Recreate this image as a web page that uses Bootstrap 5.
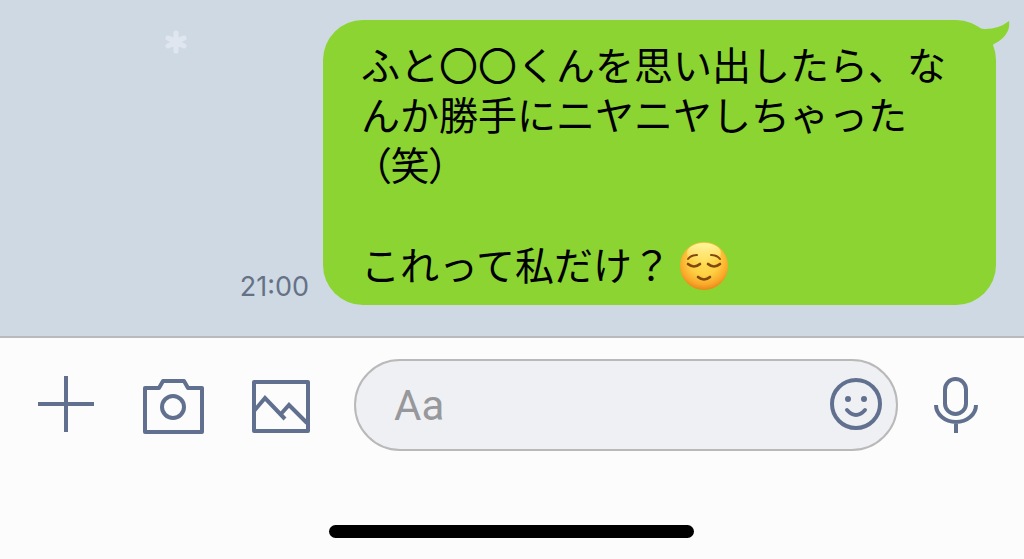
<!DOCTYPE html>
<html lang="ja">
<head>
<meta charset="utf-8">
<meta name="viewport" content="width=device-width, initial-scale=1">
<title>トーク</title>
<link href="https://cdn.jsdelivr.net/npm/bootstrap@5.3.0/dist/css/bootstrap.min.css" rel="stylesheet">
<style>
  body { background: #fcfcfc; font-family: Inter, "Noto Sans CJK JP", sans-serif; }
  .chat { background: #cfd9e4; padding: 20px 28px 31px; }
  .flake { top: 30px; left: 164px; width: 24px; height: 24px; }
  .sent-time { font-size: 27px; line-height: 36px; color: #657286; margin-right: 14px; }
  .bubble { background: #8cd432; color: #000; border-radius: 40px; padding: 18px 50px 17px 38px;
    font-family: "Noto Sans CJK JP", sans-serif; font-size: 39px; line-height: 50px; }
  .laugh { display: block; font-feature-settings: "palt"; padding-left: 10px; }
  .tail { top: 0; right: -14px; width: 40px; height: 32px; }
  .emoji { width: 50px; height: 50px; margin: 3px 0 -3px 8px; vertical-align: top; }
  .composer { border-top: 2px solid #b9babd; padding: 21px 36px 0 34px; }
  .tool { width: 64px; height: 64px; color: #627090; }
  .tools { gap: 44px; margin-right: 40px; }
  .entry { margin-right: 26px; }
  .entry .form-control { height: 92px; border: 2px solid #b9b9ba; background: #eff0f3; padding: 0 90px 0 38px;
    font-family: Roboto, sans-serif; font-size: 42px; }
  .entry .form-control::placeholder { color: #97989b; opacity: 1; }
  .smile { right: 10px; top: 14px; }
  .home-bar { width: 365px; height: 13px; background: #000; margin-bottom: 21px; }
</style>
</head>
<body class="min-vh-100 d-flex flex-column">
<main class="chat position-relative d-flex justify-content-end align-items-end">
  <svg class="flake position-absolute" viewBox="0 0 24 24" fill="none" stroke="#e0e6ef" stroke-linecap="round" aria-hidden="true">
    <path stroke-width="5" d="M12 3v18M4 8l16 8M4 16l16-8"/>
    <circle cx="12" cy="12" r="4" stroke-width="4"/>
  </svg>
  <time class="sent-time">21:00</time>
  <div class="bubble position-relative">
    <svg class="tail position-absolute" viewBox="970 20 40 32" aria-hidden="true">
      <path fill="#8cd432" d="M973 24Q979 29 985 29Q999 29 1009 21Q1011 35 994 44L984 52Z"/>
    </svg>
    <p class="m-0">ふと〇〇くんを思い出したら、な<br>んか勝手にニヤニヤしちゃった<span class="laugh">（笑）</span></p>
    <br>
    <p class="m-0">これって私だけ？<svg class="emoji" viewBox="0 0 50 50" role="img" aria-label="ほっとした顔">
      <defs>
        <radialGradient id="face" cx=".5" cy=".38" r=".62">
          <stop offset="0" stop-color="#ffe05a"/><stop offset=".5" stop-color="#ffd042"/><stop offset=".82" stop-color="#f9a829"/><stop offset="1" stop-color="#e98618"/>
        </radialGradient>
        <linearGradient id="shine" x2="0" y2="1">
          <stop offset="0" stop-color="#fff7a0"/><stop offset="1" stop-color="#fff7a0" stop-opacity="0"/>
        </linearGradient>
      </defs>
      <circle cx="25" cy="25" r="24" fill="url(#face)"/>
      <ellipse cx="25" cy="12" rx="17" ry="10" fill="url(#shine)"/>
      <g fill="none" stroke="#80480f" stroke-linecap="round">
        <path stroke-width="2" d="M9 18Q12 14 18 14M32 14Q38 14 41 18"/>
        <path stroke-width="2.6" d="M9 23Q15 28 21 23M29 23Q35 28 41 23"/>
        <path stroke-width="2.6" d="M19 36Q25 41 31 36"/>
      </g>
    </svg></p>
  </div>
</main>
<footer class="composer flex-grow-1 d-flex flex-column">
  <form class="d-flex align-items-center">
    <div class="tools d-flex flex-shrink-0">
      <button type="button" class="tool btn border-0 p-0" aria-label="追加">
        <svg class="d-block" viewBox="0 0 64 64" fill="none" stroke="currentColor" stroke-width="4"><path d="M4 31h56M32 3v56"/></svg>
      </button>
      <button type="button" class="tool btn border-0 p-0" aria-label="カメラ">
        <svg class="d-block" viewBox="0 0 64 64" fill="none" stroke="currentColor" stroke-width="4" stroke-linejoin="round"><path d="M3 15h14l4-7h21l4 7h14v44H3z"/><circle cx="31" cy="34" r="11"/></svg>
      </button>
      <button type="button" class="tool btn border-0 p-0" aria-label="写真">
        <svg class="d-block" viewBox="0 0 64 64" fill="none" stroke="currentColor" stroke-width="4"><path stroke-linejoin="round" d="M4 9h54v49H4z"/><path d="M4 38l11-13 20 21M30 42l9-10 18 18"/></svg>
      </button>
    </div>
    <div class="entry position-relative flex-grow-1">
      <input type="text" class="form-control rounded-pill" placeholder="Aa" aria-label="メッセージを入力">
      <button type="button" class="smile tool btn border-0 p-0 position-absolute" aria-label="スタンプ">
        <svg class="d-block" viewBox="0 0 64 64" fill="none" stroke="currentColor" stroke-width="4" stroke-linecap="round"><circle cx="32" cy="31" r="24"/><path d="M23 37Q32 47 41 37"/><circle cx="24" cy="26" r="3" fill="currentColor" stroke="none"/><circle cx="40" cy="26" r="3" fill="currentColor" stroke="none"/></svg>
      </button>
    </div>
    <button type="button" class="tool btn border-0 p-0 flex-shrink-0" aria-label="音声">
      <svg class="d-block" viewBox="0 0 64 64" fill="none" stroke="currentColor" stroke-width="4"><rect x="21" y="6" width="21" height="35" rx="10.5"/><path d="M12 32a20 17 0 0 0 40 0M32 49v11"/></svg>
    </button>
  </form>
  <div class="home-bar rounded-pill mt-auto align-self-center"></div>
</footer>
<script src="https://cdn.jsdelivr.net/npm/bootstrap@5.3.0/dist/js/bootstrap.bundle.min.js"></script>
</body>
</html>
